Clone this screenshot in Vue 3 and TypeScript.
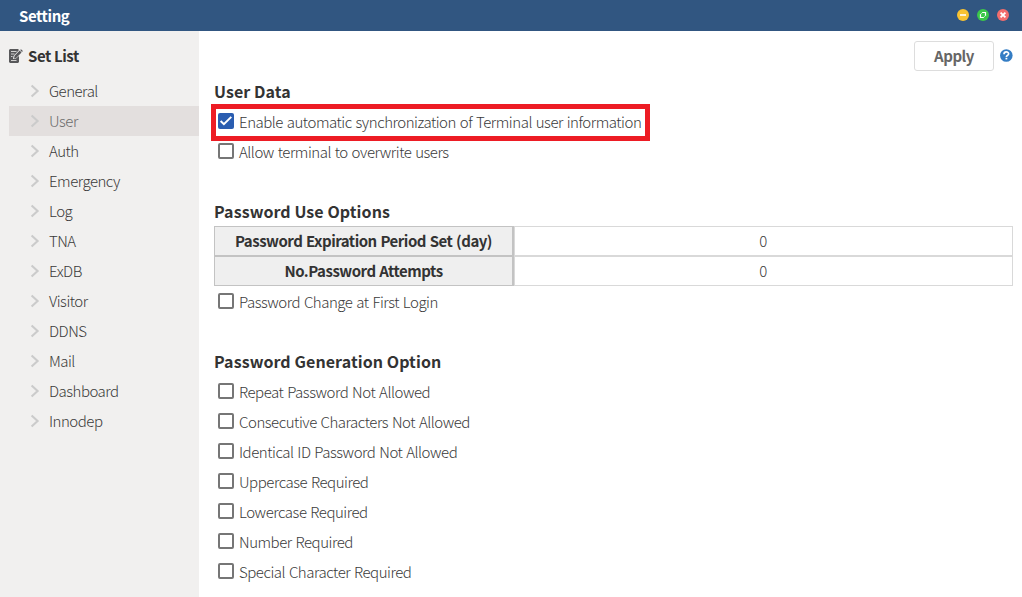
<script setup lang="ts">
import { ref } from 'vue'

interface Option {
  label: string
  checked: boolean
}

const menu: string[] = [
  'General', 'User', 'Auth', 'Emergency', 'Log', 'TNA',
  'ExDB', 'Visitor', 'DDNS', 'Mail', 'Dashboard', 'Innodep',
]
const active = ref('User')

const userData = ref<Option[]>([
  { label: 'Enable automatic synchronization of Terminal user information', checked: true },
  { label: 'Allow terminal to overwrite users', checked: false },
])
const limits = [
  { label: 'Password Expiration Period Set (day)', value: 0 },
  { label: 'No.Password Attempts', value: 0 },
]
const useOptions = ref<Option[]>([{ label: 'Password Change at First Login', checked: false }])
const generation = ref<Option[]>([
  { label: 'Repeat Password Not Allowed', checked: false },
  { label: 'Consecutive Characters Not Allowed', checked: false },
  { label: 'Identical ID Password Not Allowed', checked: false },
  { label: 'Uppercase Required', checked: false },
  { label: 'Lowercase Required', checked: false },
  { label: 'Number Required', checked: false },
  { label: 'Special Character Required', checked: false },
])
const sections = [
  { title: 'User Data', options: userData, table: false },
  { title: 'Password Use Options', options: useOptions, table: true },
  { title: 'Password Generation Option', options: generation, table: false },
]
</script>

<template>
  <div class="window">
    <header class="titlebar">
      <span class="title">Setting</span>
      <div class="controls">
        <svg width="12" height="12" viewBox="0 0 12 12"><circle cx="6" cy="6" r="6" fill="#f9c331" /><path d="M3 6h6" stroke="#fff" stroke-width="1.6" /></svg>
        <svg width="12" height="12" viewBox="0 0 12 12"><circle cx="6" cy="6" r="6" fill="#3bc74a" /><path d="M5.2 3.5h3.3v3.3M3.5 5.2v3.3h3.3" fill="none" stroke="#fff" stroke-width="1.2" /><path d="M3.5 5.4 5.4 3.5M6.6 8.5l1.9-1.9" stroke="#fff" stroke-width=".6" /></svg>
        <svg width="12" height="12" viewBox="0 0 12 12"><circle cx="6" cy="6" r="6" fill="#f26d6d" /><path d="m3.6 3.6 4.8 4.8M8.4 3.6 3.6 8.4" stroke="#fff" stroke-width="1.8" /></svg>
      </div>
    </header>
    <div class="body">
      <aside class="sidebar">
        <div class="list-title">
          <svg width="14" height="14" viewBox="0 0 14 14">
            <path d="M1 0h8l1 1-5.5 6L4 10l3-.5L10 7v6l-1 1H1l-1-1V1z" fill="#58585a" />
            <path d="M2 2.5h5.5M2 5h3.5M2 7.5h1.5M2 11.5h5.5" stroke="#f1f0ef" stroke-width=".8" />
            <path d="m5 9.5.6-2.8L10.7 1.6l1.8 1.8-5.1 5.3zM11.2 1.1l.8-.8 1.9 1.8-.9.9z" fill="#58585a" />
          </svg>
          <span>Set List</span>
        </div>
        <nav class="menu">
          <a v-for="item in menu" :key="item" class="item" :class="{ active: item === active }" @click="active = item">
            <svg width="10" height="14" viewBox="0 0 10 14"><path d="m1.6 1.4 6 5.6-6 5.6" fill="none" stroke="#cbcbcb" stroke-width="2.1" /></svg>
            <span>{{ item }}</span>
          </a>
        </nav>
      </aside>
      <main class="content">
        <div class="toolbar">
          <button class="apply">Apply</button>
          <svg width="13" height="13" viewBox="0 0 13 13"><circle cx="6.3" cy="6.5" r="6.3" fill="#347dc4" /><path d="M4 5.2c0-3.1 4.6-2.9 4.6-.4 0 1.6-2.2 1.5-2.2 3.1" fill="none" stroke="#fff" stroke-width="1.7" /><path d="M5.5 8.8h1.8v1.6H5.5z" fill="#fff" /></svg>
        </div>
        <section v-for="s in sections" :key="s.title" class="section">
          <h2>{{ s.title }}</h2>
          <table v-if="s.table" class="limits">
            <tbody>
              <tr v-for="l in limits" :key="l.label">
                <th>{{ l.label }}</th>
                <td>{{ l.value }}</td>
              </tr>
            </tbody>
          </table>
          <label v-for="o in s.options.value" :key="o.label" class="option" :class="{ highlighted: o.checked }" @click="o.checked = !o.checked">
            <span class="box" :class="{ checked: o.checked }">
              <svg v-if="o.checked" width="16" height="16" viewBox="0 0 16 16"><path d="m2.6 8 3.3 3.2 7.4-7.3" fill="none" stroke="#fff" stroke-width="2" /></svg>
            </span>
            <span class="text">{{ o.label }}</span>
          </label>
        </section>
      </main>
    </div>
  </div>
</template>

<style>
body { margin: 0; background: #fff; overflow: hidden; }
</style>

<style scoped>
.window {
  display: flex;
  flex-direction: column;
  height: 597px;
  font-family: "Noto Sans CJK KR", "Noto Sans", sans-serif;
  font-size: 15px;
  font-weight: 300;
  letter-spacing: -0.42px;
  color: #3a3a3a;
}
.titlebar {
  display: flex;
  justify-content: space-between;
  align-items: center;
  height: 31px;
  flex: none;
  box-sizing: border-box;
  padding: 0 13px 0 19px;
  background: #315681;
}
.title { color: #fff; font-weight: 700; line-height: 31px; }
.controls { display: flex; gap: 8px; margin-top: -1px; }
.controls svg, .toolbar svg, .item svg, .list-title svg, .box svg { display: block; flex: none; }
.body { display: flex; flex: 1; min-height: 0; }
.sidebar {
  width: 199px;
  flex: none;
  box-sizing: border-box;
  padding: 10px 0 0 9px;
  background: #f1f0ef;
}
.list-title {
  display: flex;
  align-items: center;
  gap: 5px;
  height: 30px;
  margin-bottom: 5px;
  font-weight: 700;
  color: #333;
}
.list-title span, .item span { line-height: 28px; }
.item {
  display: flex;
  align-items: center;
  gap: 9px;
  height: 30px;
  padding-left: 21px;
  letter-spacing: -0.5px;
}
.item.active { background: #e3dfde; color: #6c6c6c; }
.content { flex: 1; padding: 10px 9px 0 15px; }
.toolbar {
  display: flex;
  justify-content: flex-end;
  align-items: center;
  gap: 6px;
  height: 30px;
}
.toolbar svg { margin-bottom: 1px; }
.apply {
  width: 80px;
  height: 30px;
  box-sizing: border-box;
  padding: 0;
  border: 1px solid #ddd;
  border-radius: 3px;
  background: #fff;
  font: 700 15px/28px "Noto Sans CJK KR", sans-serif;
  letter-spacing: -0.5px;
  color: #666;
}
.section { margin-bottom: 30px; }
.toolbar + .section { margin-top: 5px; }
h2 {
  margin: 0;
  height: 30px;
  line-height: 31px;
  font-size: 16px;
  font-weight: 700;
  letter-spacing: 0.08px;
  color: #333;
}
.option {
  position: relative;
  display: flex;
  align-items: center;
  gap: 5px;
  width: max-content;
  height: 30px;
  padding-left: 4px;
  letter-spacing: -0.47px;
  word-spacing: 0.95px;
}
.highlighted::after {
  content: "";
  position: absolute;
  inset: -2px -9px -5px -3px;
  border: 5px solid #ed1c24;
  pointer-events: none;
}
.box {
  width: 16px;
  height: 16px;
  box-sizing: border-box;
  border: 2px solid #767676;
  border-radius: 2px;
}
.box.checked { border: 0; background: #2a5db0; }
.text { line-height: 28px; padding-top: 2px; }
.limits {
  width: 799px;
  height: 60px;
  table-layout: fixed;
  border-collapse: separate;
  border-spacing: 0;
}
th, td { height: 30px; padding: 0; box-sizing: border-box; line-height: 28px; text-align: center; }
th { width: 300px; border: 1px solid #c3c3c3; border-right-width: 2px; background: #efefef; font-weight: 700; letter-spacing: -0.5px; word-spacing: 0.8px; color: #333; }
td { border: 1px solid #d9d9d9; padding-right: 1px; }
</style>
